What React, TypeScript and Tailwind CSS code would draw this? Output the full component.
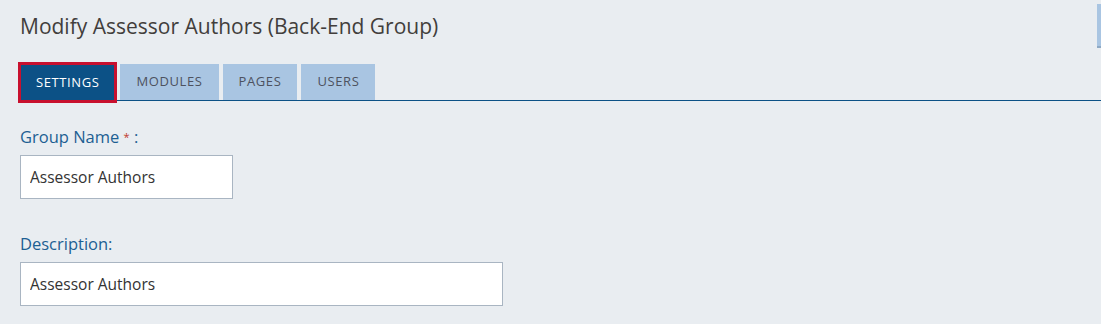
import { useState } from 'react';

const tabs = ['Settings', 'Modules', 'Pages', 'Users'];

export default function App() {
  const [active, setActive] = useState('Settings');
  const [name, setName] = useState('Assessor Authors');
  const [description, setDescription] = useState('Assessor Authors');

  return (
    <div
      className="relative min-h-[324px] bg-[#e9edf1] px-5 pt-[11px] text-[#3d3d3d]"
      style={{ fontFamily: '"Open Sans", "Noto Sans", sans-serif' }}
    >
      {/* cut-off button at the right edge */}
      <div className="absolute right-0 top-[4px] h-[44px] w-[4px] border-b-2 border-[#8ea9c4] bg-[#a9c5e2]" />

      <h1 className="text-[21px] leading-[30px] text-[#423e3c]">Modify Assessor Authors (Back-End Group)</h1>

      {/* Tabs */}
      <div className="mt-[21px] -mr-5 flex items-end gap-1 border-b border-[#0c5186]">
        {tabs.map((t) => (
          <button
            key={t}
            onClick={() => setActive(t)}
            className={
              active === t
                ? '-mb-[3px] -ml-[2px] -mr-[1px] h-[41px] border-[3px] border-[#c8102e] bg-[#0c5186] px-[15px] text-[13px] uppercase tracking-[0.6px] text-white'
                : 'h-[36px] bg-[#a9c5e2] px-[16px] text-[13px] uppercase tracking-[0.6px] text-[#4d5260]'
            }
          >
            {t}
          </button>
        ))}
      </div>

      {/* Form */}
      <div className="mt-[26px]">
        <label className="block text-[16.5px] leading-5 text-[#1d5f93]">
          Group Name <span className="align-top text-[11px] text-[#c0392b]">*</span> :
        </label>
        <input
          value={name}
          onChange={(e) => setName(e.target.value)}
          className="mt-[8px] block h-[44px] w-[213px] border border-[#a9b5c2] bg-white px-[9px] text-[15.5px] text-[#333] outline-none"
        />

        <label className="mt-[35px] block text-[16.5px] leading-5 text-[#1d5f93]">Description:</label>
        <input
          value={description}
          onChange={(e) => setDescription(e.target.value)}
          className="mt-[8px] block h-[44px] w-[483px] border border-[#a9b5c2] bg-white px-[9px] text-[15.5px] text-[#333] outline-none"
        />
      </div>
    </div>
  );
}
